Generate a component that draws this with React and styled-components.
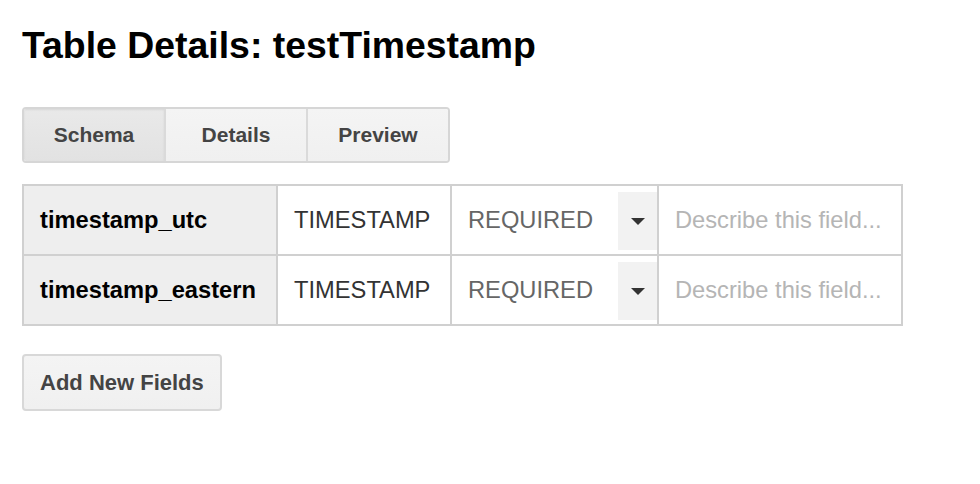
import { createGlobalStyle, styled } from "styled-components";

const GlobalStyle = createGlobalStyle`
  html, body {
    margin: 0;
    padding: 0;
    background: #ffffff;
  }
  body {
    font-family: "Liberation Sans", Arial, Helvetica, sans-serif;
  }
`;

const fields = [
  { name: "timestamp_utc", type: "TIMESTAMP", mode: "REQUIRED" },
  { name: "timestamp_eastern", type: "TIMESTAMP", mode: "REQUIRED" },
];

const tabs = ["Schema", "Details", "Preview"];

const App = () => {
  return (
    <>
      <GlobalStyle />
      <Page>
        <Title>Table Details: testTimestamp</Title>
        <TabBar>
          {tabs.map((t, i) => (
            <Tab key={t} $active={i === 0}>
              {t}
            </Tab>
          ))}
        </TabBar>
        <SchemaGrid>
          {fields.map((f) => (
            <Row key={f.name}>
              <NameCell>{f.name}</NameCell>
              <TypeCell>{f.type}</TypeCell>
              <ModeCell>
                <ModeText>{f.mode}</ModeText>
                <SelectArrow>
                  <Caret />
                </SelectArrow>
              </ModeCell>
              <DescCell placeholder="Describe this field..." />
            </Row>
          ))}
        </SchemaGrid>
        <AddButton>Add New Fields</AddButton>
      </Page>
    </>
  );
};

export default App;

const Page = styled.div`
  display: flex;
  flex-direction: column;
  align-items: flex-start;
  padding: 24px 22px;
`;

const Title = styled.h1`
  margin: 0 0 41px 0;
  font-size: 37.4px;
  line-height: 42px;
  font-weight: 700;
  color: #000000;
`;

const TabBar = styled.div`
  display: flex;
  border: 2px solid #d6d6d6;
  border-radius: 4px;
  overflow: hidden;
  margin-bottom: 21px;
`;

const Tab = styled.div`
  width: 140px;
  height: 52px;
  display: flex;
  align-items: center;
  justify-content: center;
  font-size: 21px;
  font-weight: 700;
  color: #444444;
  background: ${(p) =>
    p.$active
      ? "linear-gradient(#e9e9e9, #e2e2e2)"
      : "linear-gradient(#f4f4f4, #f0f0f0)"};
  box-shadow: ${(p) => (p.$active ? "inset 0 1px 2px rgba(0,0,0,0.08)" : "none")};
  & + & {
    border-left: 2px solid #dadada;
  }
`;

const SchemaGrid = styled.div`
  display: flex;
  flex-direction: column;
  gap: 2px;
  padding: 2px;
  background: #d0d0d0;
  margin-bottom: 28px;
`;

const Row = styled.div`
  display: grid;
  grid-template-columns: 252px 172px 205px 242px;
  gap: 2px;
  height: 68px;
`;

const Cell = styled.div`
  display: flex;
  align-items: center;
  padding-left: 16px;
  font-size: 23.7px;
  background: #ffffff;
`;

const NameCell = styled(Cell)`
  background: #eeeeee;
  font-weight: 700;
  color: #000000;
`;

const TypeCell = styled(Cell)`
  color: #333333;
`;

const ModeCell = styled(Cell)`
  align-items: stretch;
  padding-right: 0;
`;

const ModeText = styled.span`
  flex: 1;
  display: flex;
  align-items: center;
  color: #666666;
  padding-top: 1px;
`;

const SelectArrow = styled.div`
  width: 39px;
  margin: 6px 0 4px;
  background: #f2f2f2;
  display: flex;
  align-items: center;
  justify-content: center;
`;

const Caret = styled.div`
  width: 0;
  height: 0;
  border-left: 7px solid transparent;
  border-right: 7px solid transparent;
  border-top: 7px solid #333333;
`;

const DescCell = styled.input`
  border: none;
  outline: none;
  margin: 0;
  padding: 0 0 0 16px;
  font-family: "Liberation Sans", Arial, Helvetica, sans-serif;
  font-size: 23.7px;
  color: #333333;
  background: #ffffff;
  min-width: 0;
  &::placeholder {
    color: #b5b5b5;
  }
`;

const AddButton = styled.button`
  height: 57px;
  padding: 0 16px;
  border: 2px solid #d8d8d8;
  border-radius: 4px;
  background: linear-gradient(#f4f4f4, #f0f0f0);
  font-family: "Liberation Sans", Arial, Helvetica, sans-serif;
  font-size: 22px;
  font-weight: 700;
  color: #444444;
`;
